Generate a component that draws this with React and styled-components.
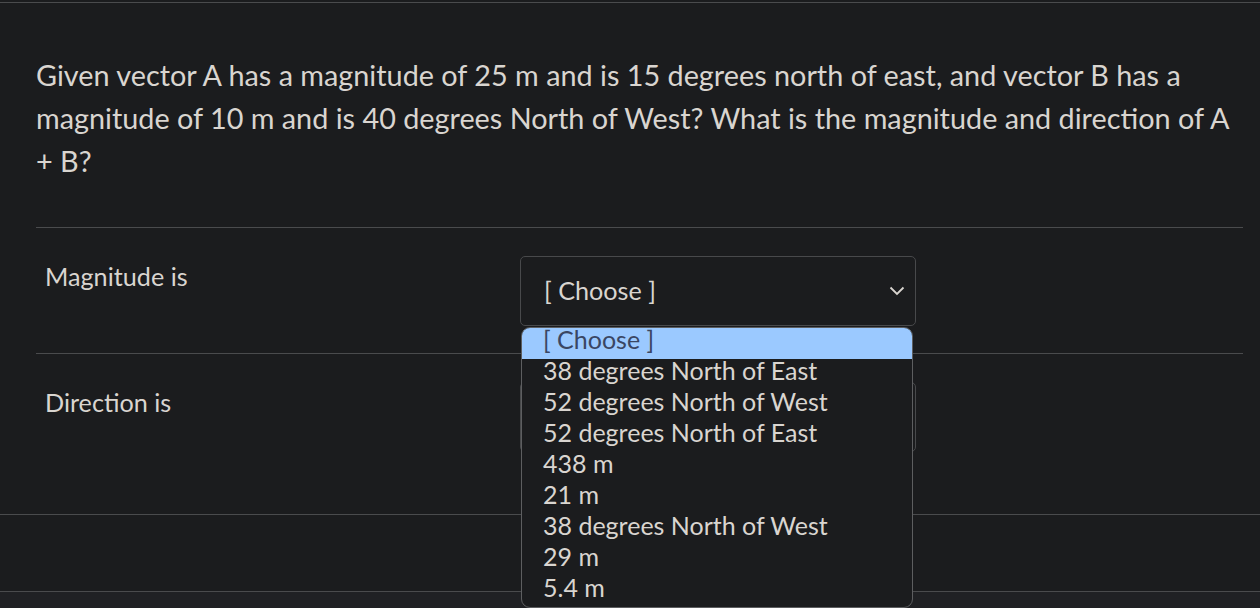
import React from 'react'
import styled, { createGlobalStyle } from 'styled-components'

const Global = createGlobalStyle`
  html, body {
    margin: 0;
    padding: 0;
    background: #1b1c1e;
    font-family: Lato, "Noto Sans", sans-serif;
    color: #d9d5d0;
  }
`

const Page = styled.div`
  width: 1260px;
  height: 608px;
  overflow: hidden;
  position: relative;
  padding-top: 2px;
  box-sizing: border-box;
  background: #1b1c1e;
`

const Question = styled.div`
  border-top: 1px solid #4a4b4d;
  padding: 0 17px 0 36px;
`

const Prompt = styled.p`
  margin: 0;
  padding: 51px 0 44px;
  font-size: 28.8px;
  line-height: 43px;
  border-bottom: 1px solid #4a4b4d;
`

const Row = styled.div`
  display: grid;
  grid-template-columns: 484px 396px;
  padding: 28px 0 ${({ last }) => (last ? '62px' : '27px')};
  border-bottom: ${({ last }) => (last ? 'none' : '1px solid #4a4b4d')};
`

const Label = styled.div`
  padding-left: 9px;
  font-size: 25.2px;
  line-height: 42px;
  margin-top: -1px;
`

const Select = styled.div`
  height: 70px;
  border: 1px solid #48494b;
  border-radius: 5px;
  display: flex;
  align-items: center;
  justify-content: space-between;
  padding: 0 10px 3px 23px;
  font-size: 25.2px;
  color: #d9d5d0;
  box-sizing: border-box;

  svg {
    margin-top: 3px;
  }
`

const Footer = styled.div`
  border-top: 1px solid #4a4b4d;
  height: 76px;
  border-bottom: 1px solid #4a4b4d;
`

const Bottom = styled.div`
  background: #202124;
  height: 20px;
`

const Menu = styled.ul`
  position: absolute;
  top: 327px;
  left: 521px;
  width: 392px;
  margin: 0;
  padding: 0;
  list-style: none;
  background: #1b1c1e;
  border: 1.5px solid #5d5e60;
  border-radius: 9px;
  overflow: hidden;
  box-sizing: border-box;
`

const Option = styled.li`
  height: 31px;
  line-height: 22px;
  padding-left: 21px;
  font-size: 25px;
  background: ${({ active }) => (active ? '#9bc9ff' : 'transparent')};
  color: ${({ active }) => (active ? '#3a4663' : '#d9d5d0')};
  white-space: nowrap;
`

const options = [
  '[ Choose ]',
  '38 degrees North of East',
  '52 degrees North of West',
  '52 degrees North of East',
  '438 m',
  '21 m',
  '38 degrees North of West',
  '29 m',
  '5.4 m',
]

function Chevron() {
  return (
    <svg width="16" height="10" viewBox="0 0 16 10" fill="none">
      <path d="M1.5 1.5 L8 8 L14.5 1.5" stroke="#d9d5d0" strokeWidth="1.8" />
    </svg>
  )
}

export default function App() {
  return (
    <Page>
      <Global />
      <Question>
        <Prompt>
          Given vector A has a magnitude of 25 m and is 15 degrees north of east, and vector B has a
          magnitude of 10 m and is 40 degrees North of West? What is the magnitude and direction of A
          + B?
        </Prompt>
        <Row>
          <Label>Magnitude is</Label>
          <Select>
            <span>[ Choose ]</span>
            <Chevron />
          </Select>
        </Row>
        <Row last>
          <Label>Direction is</Label>
          <Select>
            <span>[ Choose ]</span>
            <Chevron />
          </Select>
        </Row>
      </Question>
      <Footer />
      <Bottom />
      <Menu>
        {options.map((o, i) => (
          <Option key={i} active={i === 0}>{o}</Option>
        ))}
      </Menu>
    </Page>
  )
}
